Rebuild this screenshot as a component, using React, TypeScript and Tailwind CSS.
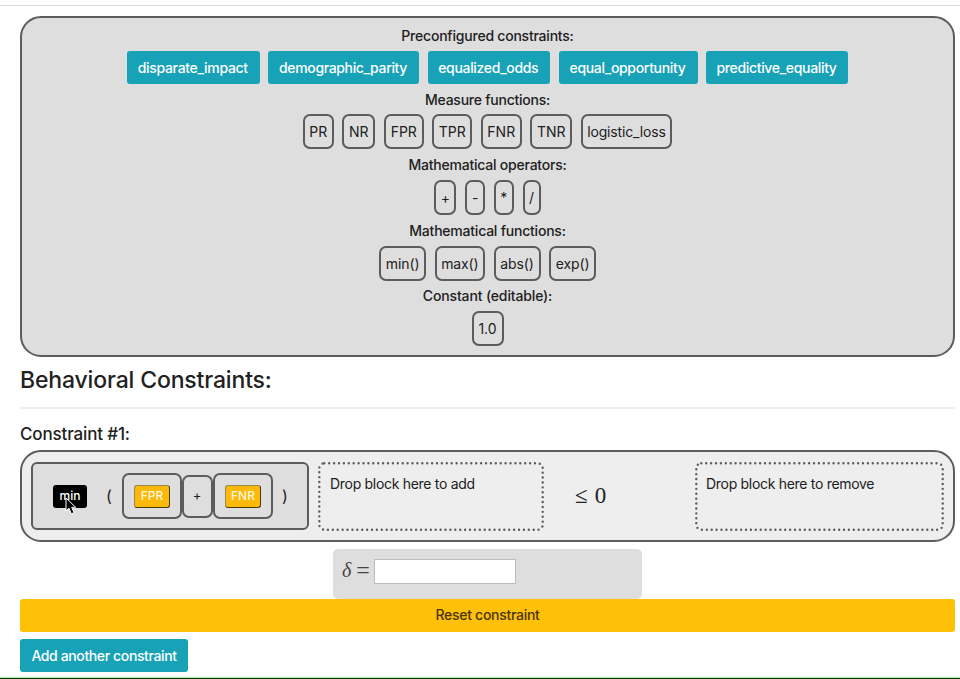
import React from 'react';

type Item = { label: string; box: string };

const preconfigured: Item[] = [
  { label: 'disparate_impact', box: 'w-[132.5px] tracking-[-0.31px]' },
  { label: 'demographic_parity', box: 'w-[151px] tracking-[-0.36px]' },
  { label: 'equalized_odds', box: 'w-[122.5px] tracking-[-0.32px]' },
  { label: 'equal_opportunity', box: 'w-[139px] tracking-[-0.33px]' },
  { label: 'predictive_equality', box: 'w-[142px] tracking-[-0.33px]' },
];

const measures: Item[] = [
  { label: 'PR', box: 'w-[30.5px]' },
  { label: 'NR', box: 'w-[33px]' },
  { label: 'FPR', box: 'w-[39.5px]' },
  { label: 'TPR', box: 'w-[40px]' },
  { label: 'FNR', box: 'w-[40.5px]' },
  { label: 'TNR', box: 'w-[42px]' },
  { label: 'logistic_loss', box: 'w-[91px] tracking-[-0.15px]' },
];

const operators: Item[] = [
  { label: '+', box: 'w-[22px]' },
  { label: '-', box: 'w-[20px]' },
  { label: '*', box: 'w-[20px]' },
  { label: '/', box: 'w-[18px]' },
];

const functions: Item[] = [
  { label: 'min()', box: 'w-[47px] tracking-[-0.1px]' },
  { label: 'max()', box: 'w-[50px] tracking-[-0.1px]' },
  { label: 'abs()', box: 'w-[47px] tracking-[-0.1px]' },
  { label: 'exp()', box: 'w-[46.5px] tracking-[-0.1px]' },
];

const constants: Item[] = [{ label: '1.0', box: 'w-[32px]' }];

function Heading({ children, className = '' }: { children: React.ReactNode; className?: string }) {
  return (
    <div
      className={`flex items-center justify-center whitespace-nowrap text-[14px] font-medium ${className}`}
    >
      {children}
    </div>
  );
}

function Tokens({ items }: { items: Item[] }) {
  return (
    <div className="flex h-[35px] justify-center gap-[8.75px]">
      {items.map((t) => (
        <div
          key={t.label}
          className={`flex shrink-0 items-center justify-center whitespace-nowrap rounded-[7px] border-2 border-[#5c5c5c] text-[14px] ${t.box}`}
        >
          {t.label}
        </div>
      ))}
    </div>
  );
}

function Chip({ label }: { label: string }) {
  return (
    <div className="flex h-[23px] w-[36px] items-center justify-center rounded-[3px] border border-t-[#9a8a50] border-r-[#4a3a10] border-b-[#4a3a10] border-l-[#9a8a50] bg-[#fdb90a] text-[12px] font-medium text-[#fff6dc]">
      {label}
    </div>
  );
}

function Cursor() {
  return (
    <svg className="absolute left-[12px] top-[12px]" width="13" height="19" viewBox="0 0 13 19">
      <path
        d="M1 1 L1 14 L4 11.2 L6.3 16.8 L9 15.7 L6.7 10.3 L10.7 10.3 Z"
        fill="#000"
        stroke="#fff"
        strokeWidth="1"
      />
    </svg>
  );
}

function DropZone({ label, width, className }: { label: string; width: number; className: string }) {
  return (
    <div
      className={`relative h-[69px] shrink-0 pt-[12px] text-[14px] leading-[20px] tracking-[-0.3px] ${className}`}
    >
      <svg className="absolute left-0 top-0" width={width} height="69">
        <rect
          x="1.3"
          y="1.3"
          width={width - 2.6}
          height="66.4"
          rx="5"
          fill="none"
          stroke="#5c5c5c"
          strokeWidth="2.4"
          strokeLinecap="round"
          strokeDasharray="0 4.9"
        />
      </svg>
      {label}
    </div>
  );
}

export default function App() {
  return (
    <div className="flex h-[679px] w-[960px] flex-col overflow-hidden bg-white font-['Inter','Liberation_Sans',sans-serif] text-[#212121]">
      <div className="mt-[5px] h-px shrink-0 bg-[#dedede]" />
      <main className="ml-[20px] flex w-[935px] flex-1 flex-col">
        <section className="mt-[10px] flex h-[341px] flex-col rounded-[21px] border-2 border-[#5c5c5c] bg-[#dedede] pt-[7px]">
          <Heading className="h-[20px] tracking-[-0.22px]">Preconfigured constraints:</Heading>
          <div className="mt-[6px] flex h-[33px] justify-center gap-[8.5px]">
            {preconfigured.map((b) => (
              <button
                key={b.label}
                className={`flex shrink-0 items-center justify-center whitespace-nowrap rounded-[3px] bg-[#17a2b8] pr-px text-[14px] font-medium text-white ${b.box}`}
              >
                {b.label}
              </button>
            ))}
          </div>
          <Heading className="h-[30px] tracking-[-0.24px]">Measure functions:</Heading>
          <Tokens items={measures} />
          <Heading className="h-[31px] tracking-[-0.22px]">Mathematical operators:</Heading>
          <Tokens items={operators} />
          <Heading className="h-[31px] tracking-[-0.22px]">Mathematical functions:</Heading>
          <Tokens items={functions} />
          <Heading className="h-[30px] pb-[2px] tracking-[-0.14px]">Constant (editable):</Heading>
          <Tokens items={constants} />
        </section>

        <h2 className="mt-[8px] flex h-[30px] items-center text-[23px] font-medium tracking-[-0.15px]">
          Behavioral Constraints:
        </h2>
        <div className="mt-[12px] h-[2px] bg-[#eeeeee]" />
        <h3 className="mt-[15px] flex h-[22px] items-center text-[17px] font-medium tracking-[-0.15px]">
          Constraint #1:
        </h3>

        <section className="mt-[4px] flex h-[92px] shrink-0 rounded-[21px] border-2 border-[#5c5c5c] bg-[#eeeeee] pl-[9px] pt-[10px]">
          <div className="flex h-[68px] w-[278px] shrink-0 items-center rounded-[6px] border-2 border-[#5c5c5c] bg-[#dedede] pl-[20px]">
            <div className="relative flex h-[23px] w-[34px] shrink-0 items-center justify-center rounded-[3px] bg-black text-[12px] font-medium text-white">
              min
              <Cursor />
            </div>
            <span className="ml-[19px] w-[7px] text-[16px]">(</span>
            <div className="ml-[9px] flex h-[46px] w-[60px] shrink-0 items-center justify-center rounded-[7px] border-2 border-[#5c5c5c]">
              <Chip label="FPR" />
            </div>
            <div className="flex h-[43px] w-[31px] shrink-0 items-center justify-center rounded-[7px] border-2 border-[#5c5c5c] pr-px text-[13px]">
              +
            </div>
            <div className="flex h-[46px] w-[60px] shrink-0 items-center justify-center rounded-[7px] border-2 border-[#5c5c5c]">
              <Chip label="FNR" />
            </div>
            <span className="ml-[9px] text-[16px]">)</span>
          </div>
          <DropZone label="Drop block here to add" width={226} className="ml-[9px] w-[226px] pl-[12px]" />
          <div className="ml-[31px] mt-[22px] flex h-[24px] w-[120px] shrink-0 items-center gap-[7px] font-['Liberation_Serif',serif] text-[23px]">
            <span>≤</span>
            <span>0</span>
          </div>
          <DropZone label="Drop block here to remove" width={249} className="w-[249px] pl-[11px]" />
        </section>

        <div className="ml-[313px] mt-[7px] flex h-[50px] w-[309px] shrink-0 items-start rounded-[5px] bg-[#dedede] pt-[10px]">
          <div className="flex h-[22px] w-[41px] items-center gap-[5px] pl-[9px] font-['Liberation_Serif',serif] text-[#444]">
            <span className="text-[20px] italic">δ</span>
            <span className="text-[24px]">=</span>
          </div>
          <input aria-label="δ" className="h-[25px] w-[142px] border border-[#bdbdbd] bg-white" />
        </div>
        <button className="flex h-[33px] shrink-0 items-center justify-center rounded-[3px] bg-[#ffc107] pb-[2px] text-[14px] font-medium tracking-[-0.28px] text-[#4a3510]">
          Reset constraint
        </button>
        <button className="mt-[7px] flex h-[33px] w-[168px] shrink-0 items-center justify-center rounded-[3px] bg-[#17a2b8] pb-px text-[14px] font-medium tracking-[-0.38px] text-white">
          Add another constraint
        </button>
      </main>
      <div className="h-[2px] shrink-0 border-t border-[#aaf59a] bg-[#063806]" />
    </div>
  );
}
